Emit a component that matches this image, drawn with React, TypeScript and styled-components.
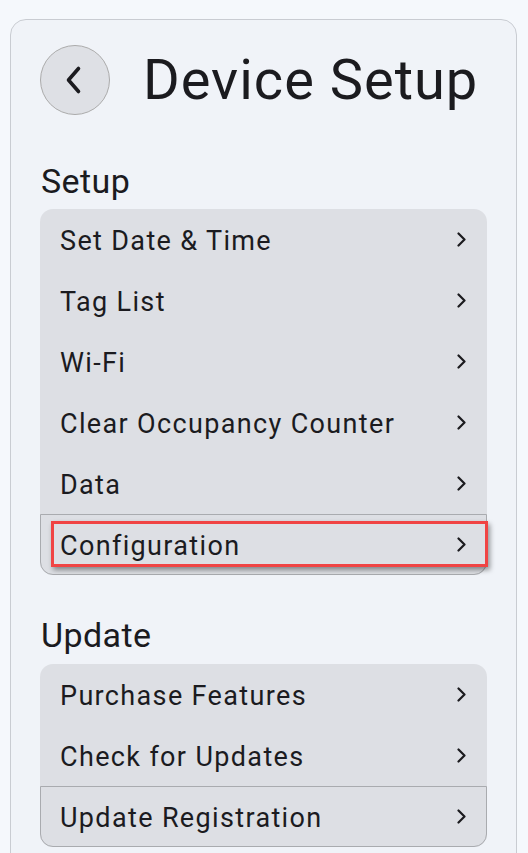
import styled, { createGlobalStyle } from "styled-components";

const GlobalStyle = createGlobalStyle`
  html, body {
    margin: 0;
    padding: 0;
    background: #f5f8fc;
    font-family: Roboto, "Liberation Sans", sans-serif;
    color: #1b1b1f;
  }
`;

const Page = styled.div`
  padding: 19px 11px 0 10px;
  height: 853px;
  box-sizing: border-box;
  overflow: hidden;
`;

const Card = styled.div`
  background: #f0f3f8;
  border: 1px solid #c9ccd2;
  border-radius: 16px;
  padding: 25px 29px 40px 29px;
  min-height: 900px;
`;

const Header = styled.div`
  display: flex;
  align-items: center;
  gap: 33px;
`;

const BackButton = styled.button`
  width: 70px;
  height: 70px;
  border-radius: 50%;
  border: 1px solid #ababab;
  background: #dee0e5;
  display: flex;
  align-items: center;
  justify-content: center;
  padding: 0;
  flex-shrink: 0;
`;

const Title = styled.h1`
  margin: 0;
  font-size: 56px;
  font-weight: 400;
  line-height: 70px;
  letter-spacing: 1px;
`;

const SectionTitle = styled.h2<{ $top: number; $bottom: number }>`
  margin: ${(p) => p.$top}px 0 ${(p) => p.$bottom}px 1px;
  font-size: 34px;
  font-weight: 400;
  line-height: 40px;
  letter-spacing: 0.4px;
`;

const Group = styled.div`
  background: #dddfe4;
  border-radius: 13px;
  display: flex;
  flex-direction: column;
`;

const Row = styled.div<{ $outlined?: boolean }>`
  position: relative;
  height: 61px;
  box-sizing: border-box;
  display: flex;
  align-items: center;
  justify-content: space-between;
  padding: 0 20px 0 20px;
  font-size: 27px;
  letter-spacing: 1.35px;
  ${(p) =>
    p.$outlined &&
    `
    border: 1px solid #a9abaf;
    border-radius: 0 0 13px 13px;
    padding: 0 19px 0 19px;
  `}
`;

const Label = styled.span`
  padding-top: 2px;
`;

const Highlight = styled.div`
  position: absolute;
  left: 10px;
  top: 6px;
  right: -2px;
  height: 46px;
  border: 3px solid #f04444;
  box-sizing: border-box;
  box-shadow: 2px 3px 5px rgba(0, 0, 0, 0.4);
  pointer-events: none;
`;

const Chevron = () => (
  <svg width="11" height="15" viewBox="0 0 11 15" fill="none">
    <path d="M2.5 1.5 L8.5 7.5 L2.5 13.5" stroke="#1b1b1f" strokeWidth="2.2" strokeLinecap="round" strokeLinejoin="round" />
  </svg>
);

const BackIcon = () => (
  <svg width="20" height="30" viewBox="0 0 20 30" fill="none">
    <path d="M13.5 3.5 L3.5 15 L13.5 26.5" stroke="#1b1b1f" strokeWidth="3.6" strokeLinecap="round" strokeLinejoin="round" />
  </svg>
);

interface Item {
  label: string;
  highlighted?: boolean;
}

const setupItems: Item[] = [
  { label: "Set Date & Time" },
  { label: "Tag List" },
  { label: "Wi-Fi" },
  { label: "Clear Occupancy Counter" },
  { label: "Data" },
  { label: "Configuration", highlighted: true },
];

const updateItems: Item[] = [
  { label: "Purchase Features" },
  { label: "Check for Updates" },
  { label: "Update Registration" },
];

function ItemList({ items }: { items: Item[] }) {
  return (
    <Group>
      {items.map((item, i) => (
        <Row key={item.label} $outlined={i === items.length - 1}>
          <Label>{item.label}</Label>
          <Chevron />
          {item.highlighted && <Highlight />}
        </Row>
      ))}
    </Group>
  );
}

export default function App() {
  return (
    <>
      <GlobalStyle />
      <Page>
        <Card>
          <Header>
            <BackButton aria-label="Back">
              <BackIcon />
            </BackButton>
            <Title>Device Setup</Title>
          </Header>
          <SectionTitle $top={46} $bottom={8}>Setup</SectionTitle>
          <ItemList items={setupItems} />
          <SectionTitle $top={40} $bottom={9}>Update</SectionTitle>
          <ItemList items={updateItems} />
        </Card>
      </Page>
    </>
  );
}
